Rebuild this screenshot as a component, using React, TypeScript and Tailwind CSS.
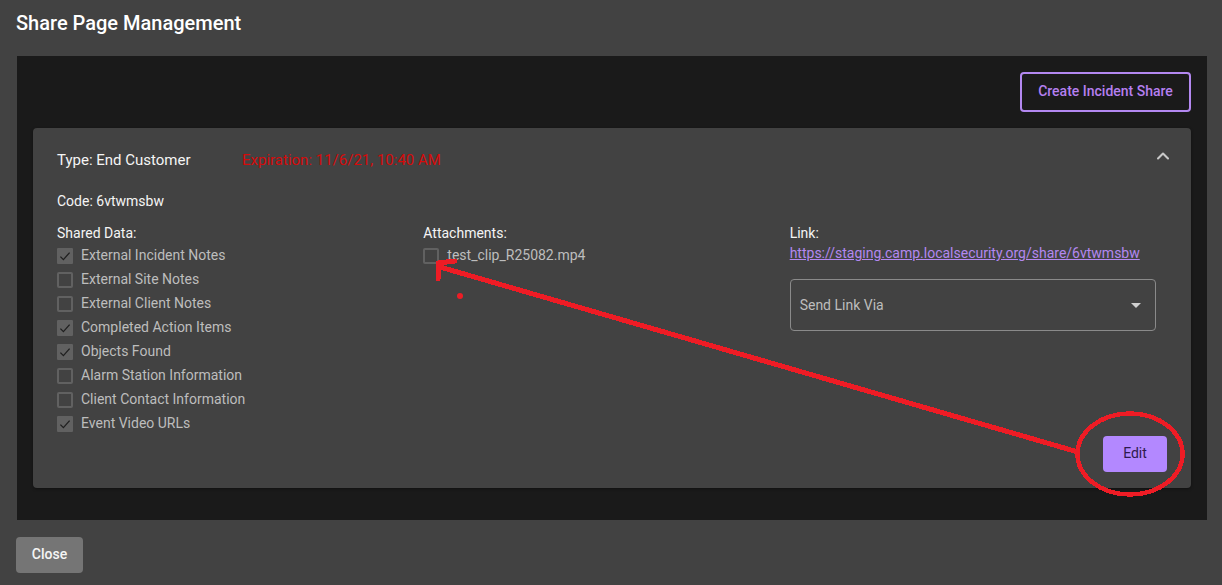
import { ChevronUp } from "lucide-react";

const SHARED = [
  { label: "External Incident Notes", checked: true },
  { label: "External Site Notes", checked: false },
  { label: "External Client Notes", checked: false },
  { label: "Completed Action Items", checked: true },
  { label: "Objects Found", checked: true },
  { label: "Alarm Station Information", checked: false },
  { label: "Client Contact Information", checked: false },
  { label: "Event Video URLs", checked: true },
];

function CheckRow({ label, checked }: { label: string; checked: boolean }) {
  return (
    <div className="flex h-6 items-center gap-2 text-sm text-[#bdbdbd]">
      {checked ? (
        <span className="flex h-4 w-4 shrink-0 items-center justify-center rounded-[1px] bg-[#616161]">
          <svg viewBox="0 0 16 16" className="h-4 w-4" fill="none" stroke="#1f1f1f" strokeWidth="1.3">
            <path d="M3.4 8.6 L6.4 11.6 L12.6 4.6" />
          </svg>
        </span>
      ) : (
        <span className="h-4 w-4 shrink-0 rounded-[2px] border-2 border-[#616161]" />
      )}
      <span className="pb-[2px]">{label}</span>
    </div>
  );
}

export default function App() {
  return (
    <div className="relative flex h-[585px] w-[1222px] flex-col overflow-hidden bg-[#424242] font-['Roboto',sans-serif] text-white">
      {/* Title */}
      <h1 className="px-4 pt-[10px] pb-[1px] text-xl leading-[26px] font-medium text-white">Share Page Management</h1>

      {/* Panel */}
      <div className="mt-[19px] mr-[15px] ml-[17px] flex h-[464px] flex-col bg-[#1a1a1a] px-4 pt-4">
        <div className="flex justify-end">
          <button className="h-10 w-[171px] rounded border-2 border-[#b388f0] pb-[2px] text-sm font-medium text-[#b57ff0]">
            Create Incident Share
          </button>
        </div>

        {/* Share card */}
        <div className="mt-4 flex h-[360px] flex-col rounded bg-[#424242] px-6 shadow-[0_1px_3px_rgba(0,0,0,0.4)]">
          <div className="flex h-[64px] items-center pt-[2px] text-[15px] text-[#f5f5f5]">
            <span className="w-[185px]">Type: End Customer</span>
            <span className="text-[#d50b0b]">Expiration: 11/6/21, 10:40 AM</span>
            <ChevronUp className="mt-[-8px] mr-[-6px] ml-auto h-5 w-5 text-[#c8c8c8]" strokeWidth={2.5} />
          </div>
          <p className="mt-[2px] text-sm leading-[18px] text-[#f5f5f5]">Code: 6vtwmsbw</p>

          <div className="mt-[13px] grid w-[1099px] grid-cols-3">
            <div>
              <p className="mb-[1px] text-sm leading-[20px] text-[#f5f5f5]">Shared Data:</p>
              {SHARED.map((s) => (
                <CheckRow key={s.label} label={s.label} checked={s.checked} />
              ))}
            </div>
            <div>
              <p className="mb-[1px] text-sm leading-[20px] text-[#f5f5f5]">Attachments:</p>
              <CheckRow label="test_clip_R25082.mp4" checked={false} />
            </div>
            <div>
              <p className="text-sm leading-[20px] text-[#f5f5f5]">Link:</p>
              <a className="block text-sm leading-[20px] text-[#b388f0] underline">
                https://staging.camp.localsecurity.org/share/6vtwmsbw
              </a>
              <div className="mt-4 flex h-[52px] items-center justify-between rounded border border-[#8a8a8a] pr-[14px] pl-[9px] text-sm text-[#bdbdbd]">
                <span>Send Link Via</span>
                <svg viewBox="0 0 10 5" className="h-[5px] w-[10px]" fill="#d0d0d0">
                  <path d="M0 0h10L5 5z" />
                </svg>
              </div>
            </div>
          </div>

          <div className="mt-auto mb-4 flex justify-end">
            <button className="h-9 w-16 rounded bg-[#b388ff] pb-[2px] text-sm text-[#2e1a4d]">Edit</button>
          </div>
        </div>
      </div>

      {/* Footer */}
      <div className="px-4 pt-[17px]">
        <button className="h-9 w-[67px] rounded bg-[#757575] pb-[2px] text-sm font-medium text-[#f5f5f5]">Close</button>
      </div>

      {/* Red annotations drawn over the screenshot */}
      <svg className="absolute top-0 left-0 h-[585px] w-[1222px]" viewBox="0 0 1222 585" fill="none" stroke="#ee1c25">
        <g shapeRendering="crispEdges">
          <path d="M1078 452 L440 267" strokeWidth="5" />
          <path d="M438 279 L438 263 L455 261" strokeWidth="5" strokeLinecap="round" />
          <ellipse cx="1130" cy="454" rx="52.5" ry="40.5" strokeWidth="4.5" />
        </g>
        <circle cx="460" cy="296" r="3" fill="#ee1c25" stroke="none" />
      </svg>
    </div>
  );
}
